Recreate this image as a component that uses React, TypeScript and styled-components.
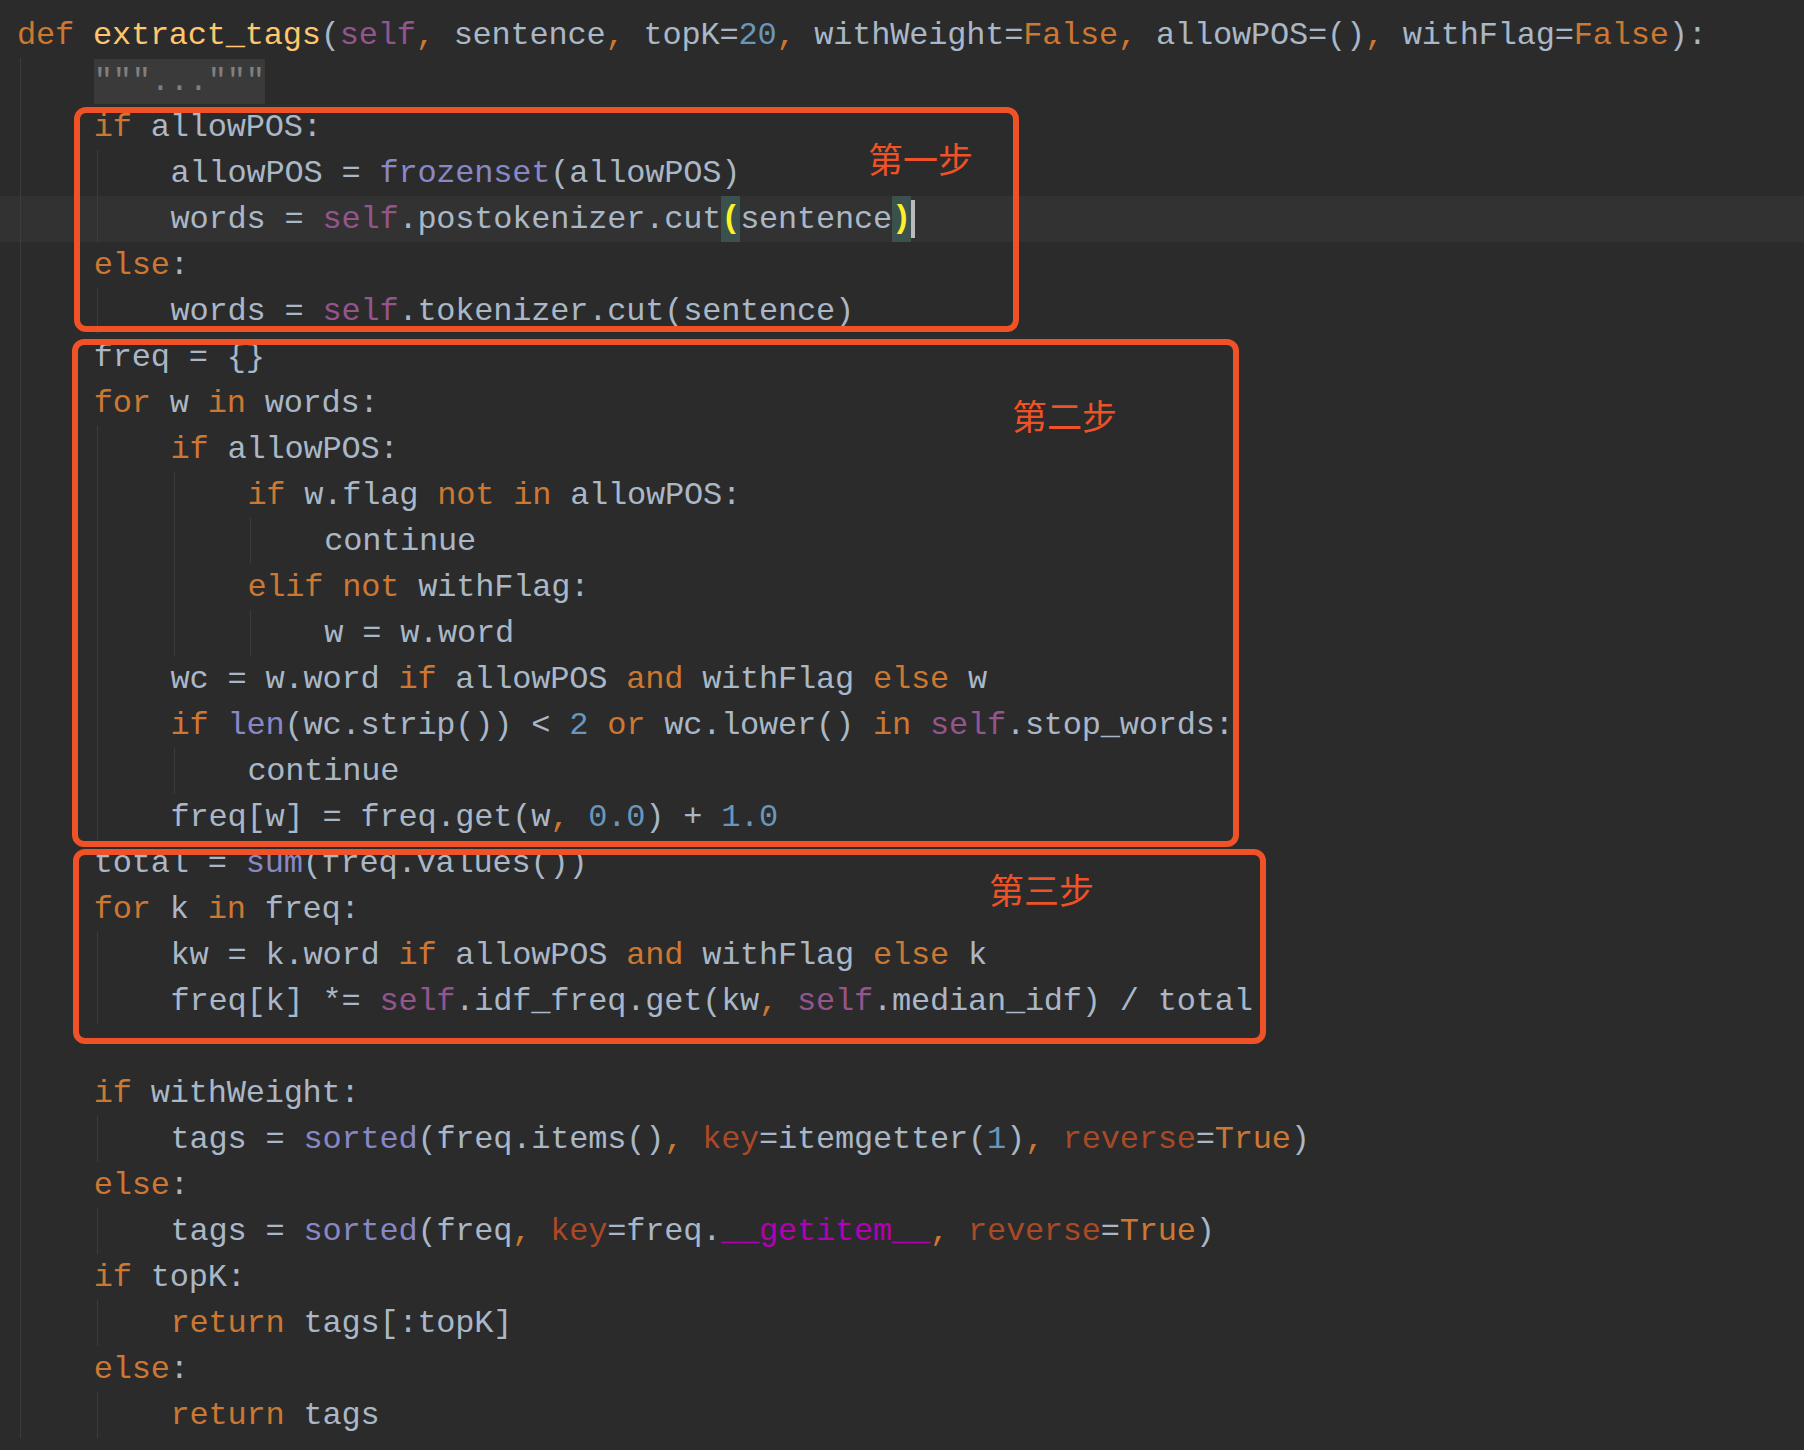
import React from "react";
import styled, {createGlobalStyle} from "styled-components";

const GlobalStyle = createGlobalStyle`
    html, body {
        margin: 0;
        padding: 0;
        background: #2b2b2b;
    }
`;

const COLOR = {
    text: '#a9b7c6',
    keyword: '#cc7832',
    self: '#94558d',
    builtin: '#8888c6',
    number: '#6897bb',
    fn: '#ffc66d',
    named: '#aa4926',
    magic: '#b200b2',
    guide: '#3c3c3c',
    mark: '#ee5226',
};

type Kind = keyof typeof COLOR;

const Editor = styled.div`
    position: relative;
    width: 1804px;
    padding-top: 12px;
    font-family: "Liberation Mono", "DejaVu Sans Mono", monospace;
    font-size: 32px;
    letter-spacing: -0.22px;
    color: ${COLOR.text};
    background: #2b2b2b;
`;
const Line = styled.div<{ $current?: boolean }>`
    display: flex;
    align-items: center;
    height: 46px;
    padding-left: 17px;
    white-space: pre;
    background: ${p => p.$current ? '#323232' : 'transparent'};
`;
const Indent = styled.span`
    position: relative;
    display: inline-block;
    width: 76.8px;
    height: 46px;

    &::before {
        content: "";
        position: absolute;
        left: 3px;
        top: 0;
        bottom: 0;
        width: 1px;
        background: ${COLOR.guide};
    }
`;
const Tok = styled.span<{ $kind: Kind }>`
    color: ${p => COLOR[p.$kind]};
`;
const Fold = styled.span`
    display: inline-block;
    height: 45px;
    line-height: 45px;
    color: #7f7f7f;
    background: #3a3a3a;
`;
const Brace = styled.span`
    display: inline-block;
    height: 46px;
    line-height: 46px;
    color: #ffef28;
    font-weight: bold;
    background: #3b514d;
`;
const Caret = styled.span`
    display: inline-block;
    width: 4px;
    height: 38px;
    background: #bbbbbb;
`;
const Callout = styled.div`
    position: absolute;
    box-sizing: border-box;
    border: 6px solid ${COLOR.mark};
    border-radius: 12px;
    pointer-events: none;
`;
const Label = styled.span`
    position: absolute;
    font-family: "Noto Sans CJK SC", "Noto Sans", sans-serif;
    font-size: 35px;
    line-height: 1;
    letter-spacing: 0;
    color: ${COLOR.mark};
`;

const KEYWORDS = new Set(['def', 'if', 'else', 'elif', 'for', 'in', 'not', 'and', 'or', 'return', 'True', 'False']);
const BUILTINS = new Set(['frozenset', 'len', 'sum', 'sorted']);
const NAMED = new Set(['key', 'reverse']);

function kindOf(tok: string): Kind {
    if (KEYWORDS.has(tok) || tok === ',') return 'keyword';
    if (tok === 'self') return 'self';
    if (BUILTINS.has(tok)) return 'builtin';
    if (NAMED.has(tok)) return 'named';
    if (tok === 'extract_tags') return 'fn';
    if (tok === '__getitem__') return 'magic';
    if (/^\d/.test(tok)) return 'number';
    return 'text';
}

function Code({src}: { src: string }) {
    const parts = src.match(/\d+\.\d+|\d+|\w+|\s+|./g) || [];
    return <>{parts.map((p, i) => <Tok key={i} $kind={kindOf(p)}>{p}</Tok>)}</>;
}

const LINES: [number, string][] = [
    [0, 'def extract_tags(self, sentence, topK=20, withWeight=False, allowPOS=(), withFlag=False):'],
    [1, '@fold'],
    [1, 'if allowPOS:'],
    [2, 'allowPOS = frozenset(allowPOS)'],
    [2, '@current'],
    [1, 'else:'],
    [2, 'words = self.tokenizer.cut(sentence)'],
    [1, 'freq = {}'],
    [1, 'for w in words:'],
    [2, 'if allowPOS:'],
    [3, 'if w.flag not in allowPOS:'],
    [4, 'continue'],
    [3, 'elif not withFlag:'],
    [4, 'w = w.word'],
    [2, 'wc = w.word if allowPOS and withFlag else w'],
    [2, 'if len(wc.strip()) < 2 or wc.lower() in self.stop_words:'],
    [3, 'continue'],
    [2, 'freq[w] = freq.get(w, 0.0) + 1.0'],
    [1, 'total = sum(freq.values())'],
    [1, 'for k in freq:'],
    [2, 'kw = k.word if allowPOS and withFlag else k'],
    [2, 'freq[k] *= self.idf_freq.get(kw, self.median_idf) / total'],
    [1, ''],
    [1, 'if withWeight:'],
    [2, 'tags = sorted(freq.items(), key=itemgetter(1), reverse=True)'],
    [1, 'else:'],
    [2, 'tags = sorted(freq, key=freq.__getitem__, reverse=True)'],
    [1, 'if topK:'],
    [2, 'return tags[:topK]'],
    [1, 'else:'],
    [2, 'return tags'],
];

const STEPS = [
    {label: '第一步', left: 74, top: 107, width: 945, height: 225, lx: 788, ly: 27},
    {label: '第二步', left: 72, top: 339, width: 1167, height: 508, lx: 934, ly: 52},
    {label: '第三步', left: 73, top: 849, width: 1193, height: 195, lx: 910, ly: 16},
];

function LineBody({src}: { src: string }) {
    if (src === '@fold') return <Fold>{'"""..."""'}</Fold>;
    if (src === '@current') {
        return (
            <>
                <Code src="words = self.postokenizer.cut"/>
                <Brace>(</Brace>
                <Code src="sentence"/>
                <Brace>)</Brace>
                <Caret/>
            </>
        );
    }
    return <Code src={src}/>;
}

function App() {
    return (
        <>
            <GlobalStyle/>
            <Editor>
                {LINES.map(([indent, src], i) => (
                    <Line key={i} $current={src === '@current'}>
                        {Array.from({length: indent}, (_, j) => <Indent key={j}/>)}
                        <LineBody src={src}/>
                    </Line>
                ))}
                {STEPS.map(s => (
                    <Callout key={s.label} style={{left: s.left, top: s.top, width: s.width, height: s.height}}>
                        <Label style={{left: s.lx, top: s.ly}}>{s.label}</Label>
                    </Callout>
                ))}
            </Editor>
        </>
    );
}

export default App;
